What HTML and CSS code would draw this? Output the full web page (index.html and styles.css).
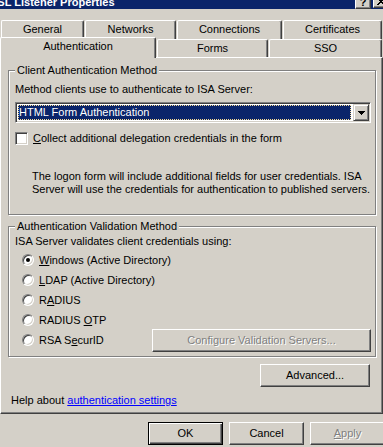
FILE: index.html
```html
<!DOCTYPE html>
<html>
<head>
<meta charset="utf-8">
<link rel="stylesheet" href="styles.css">
</head>
<body>
<div class="dialog">
  <div class="titlebar">
    <span class="title">SSL Listener Properties</span>
    <span class="tbtn help">?</span>
    <span class="tbtn close"><svg width="8" height="7" viewBox="0 0 8 7" shape-rendering="crispEdges"><path d="M0 0h2v1H0zM6 0h2v1H6zM1 1h2v1H1zM5 1h2v1H5zM2 2h4v1H2zM3 3h2v1H3zM2 4h4v1H2zM1 5h2v1H1zM5 5h2v1H5zM0 6h2v1H0zM6 6h2v1H6z" fill="#000"/></svg></span>
  </div>

  <div class="tabs">
    <div class="tabrow row1">
      <div class="tab t-general">General</div>
      <div class="tab t-networks">Networks</div>
      <div class="tab t-connections">Connections</div>
      <div class="tab t-certificates">Certificates</div>
    </div>
    <div class="tabrow row2">
      <div class="tab selected t-auth">Authentication</div>
      <div class="tab t-forms">Forms</div>
      <div class="tab t-sso">SSO</div>
    </div>
  </div>

  <div class="panel">
    <div class="group g1">
      <div class="group-title">Client Authentication Method</div>
      <div class="line l-method">Method clients use to authenticate to ISA Server:</div>
      <div class="combo">
        <div class="combo-sel"><span>HTML Form Authentication</span></div>
        <div class="combo-btn"><svg width="7" height="4" viewBox="0 0 7 4" shape-rendering="crispEdges"><path d="M0 0h7v1H0zM1 1h5v1H1zM2 2h3v1H2zM3 3h1v1H3z" fill="#000"/></svg></div>
      </div>
      <div class="check-row">
        <span class="checkbox"></span>
        <span><u>C</u>ollect additional delegation credentials in the form</span>
      </div>
      <p class="desc">The logon form will include additional fields for user credentials. ISA<br>Server will use the credentials for authentication to published servers.</p>
    </div>

    <div class="group g2">
      <div class="group-title">Authentication Validation Method</div>
      <div class="line l-isa">ISA Server validates client credentials using:</div>
      <div class="opts">
        <div class="opt"><span class="radio on"></span><span><u>W</u>indows (Active Directory)</span></div>
        <div class="opt"><span class="radio"></span><span><u>L</u>DAP (Active Directory)</span></div>
        <div class="opt"><span class="radio"></span><span>R<u>A</u>DIUS</span></div>
        <div class="opt"><span class="radio"></span><span>RADIUS <u>O</u>TP</span></div>
        <div class="opt"><span class="radio"></span><span>RSA S<u>e</u>curID</span>
          <span class="btn disabled btn-config">Configure Validation Servers...</span>
        </div>
      </div>
    </div>

    <div class="adv-row"><span class="btn btn-adv">Advanced...</span></div>

    <div class="help">Help about <a class="link" href="#">authentication settings</a></div>
  </div>

  <div class="btn-row">
    <span class="btn default btn-dlg">OK</span>
    <span class="btn btn-dlg">Cancel</span>
    <span class="btn disabled btn-dlg"><u>A</u>pply</span>
  </div>
</div>
</body>
</html>
```

FILE: styles.css
```css
html, body {
  margin: 0;
  padding: 0;
  overflow: hidden;
  background: #d4d0c8;
}

body {
  font-family: "Liberation Sans", Arial, sans-serif;
  font-size: 11px;
  line-height: 13px;
  color: #000;
}

.dialog {
  width: 392px;
  background: #d4d0c8;
}

/* Title bar */
.titlebar {
  height: 9px;
  background: #0a246a;
  display: flex;
  align-items: flex-end;
  overflow: hidden;
  padding-right: 3px;
}

.title {
  color: #fff;
  font-weight: bold;
  white-space: nowrap;
  margin-left: -10px;
}

.tbtn {
  box-sizing: border-box;
  width: 16px;
  height: 14px;
  flex-shrink: 0;
  margin-bottom: 1px;
  background: #d4d0c8;
  border: 1px solid;
  border-color: #fff #404040 #404040 #fff;
  box-shadow: inset -1px -1px #808080;
  display: flex;
  align-items: center;
  justify-content: center;
  font-weight: bold;
  font-size: 11px;
  line-height: 11px;
}

.help {
  margin-left: auto;
}

.tbtn.help {
  margin-left: auto;
}

.tbtn.close {
  margin-left: 2px;
}

/* Tabs */
.tabs {
  margin-top: 11px;
}

.tabrow {
  display: flex;
  align-items: flex-start;
  gap: 1px;
}

.row1 {
  margin-left: 1px;
}

.tab {
  box-sizing: border-box;
  height: 19px;
  background: #d4d0c8;
  border-top: 1px solid #fff;
  border-left: 1px solid #fff;
  border-right: 1px solid #404040;
  border-radius: 2px 2px 0 0;
  box-shadow: inset -1px 0 #808080;
  text-align: center;
  padding-top: 2px;
  white-space: nowrap;
}

.row2 .tab {
  height: 18px;
}

.row2 .tab.selected {
  height: 21px;
  margin-top: -2px;
  margin-bottom: -1px;
  position: relative;
  z-index: 1;
}

.t-general { width: 83px; }
.t-networks { width: 91px; }
.t-connections { width: 105px; }
.t-certificates { width: 99px; }
.t-auth { width: 156px; }
.t-forms { width: 111px; }
.t-sso { width: 113px; }

/* Panel */
.panel {
  box-sizing: border-box;
  width: 383px;
  border-top: 1px solid #fff;
  border-left: 1px solid #fff;
  border-right: 1px solid #404040;
  border-bottom: 1px solid #404040;
  box-shadow: inset -1px -1px #808080;
  padding: 12px 6px 6px 7px;
}

.group {
  border: 1px solid #808080;
  box-shadow: inset 1px 1px #fff, 1px 1px #fff;
  padding: 0 4px 18px 6px;
}

.g2 {
  margin-top: 11px;
  padding-bottom: 6px;
}

.group-title {
  display: table;
  margin-top: -7px;
  padding: 0 2px;
  background: #d4d0c8;
  white-space: nowrap;
}

.line {
  white-space: nowrap;
}

.l-method {
  margin-top: 6px;
}

.l-isa {
  margin-top: 2px;
}

/* Combo box */
.combo {
  box-sizing: border-box;
  width: 356px;
  height: 21px;
  margin-top: 6px;
  border: 1px solid;
  border-color: #808080 #fff #fff #808080;
  padding: 1px;
  box-shadow: inset 1px 1px #404040, inset -1px -1px #d4d0c8;
  background: #fff;
  display: flex;
}

.combo-sel {
  flex: 1;
  margin: 1px 2px 1px 1px;
  background: #0a246a;
  color: #fff;
  border: 1px dotted #f5db95;
  padding-left: 0;
  white-space: nowrap;
  line-height: 13px;
}

.combo-btn {
  box-sizing: border-box;
  width: 16px;
  height: 17px;
  flex-shrink: 0;
  background: #d4d0c8;
  border: 1px solid;
  border-color: #d4d0c8 #404040 #404040 #d4d0c8;
  box-shadow: inset 1px 1px #fff, inset -1px -1px #808080;
  display: flex;
  align-items: center;
  justify-content: center;
}

.combo-btn svg {
  display: block;
}

/* Checkbox */
.check-row {
  display: flex;
  align-items: center;
  height: 13px;
  margin-top: 9px;
  white-space: nowrap;
}

.checkbox {
  box-sizing: border-box;
  width: 13px;
  height: 13px;
  flex-shrink: 0;
  margin-right: 5px;
  background: #fff;
  border: 1px solid;
  border-color: #808080 #fff #fff #808080;
  box-shadow: inset 1px 1px #404040, inset -1px -1px #d4d0c8;
}

.desc {
  margin: 25px 0 0 17px;
  white-space: nowrap;
}

/* Radios */
.opts {
  margin-top: 2px;
}

.opt {
  display: flex;
  align-items: center;
  height: 20px;
  padding-left: 7px;
  white-space: nowrap;
}

.radio {
  box-sizing: border-box;
  width: 12px;
  height: 12px;
  flex-shrink: 0;
  margin-right: 5px;
  border-radius: 50%;
  background: #fff;
  border: 1px solid;
  border-color: #808080 #fff #fff #808080;
  box-shadow: inset 1px 1px #404040, inset -1px -1px #d4d0c8;
  position: relative;
}

.radio.on::after {
  content: "";
  position: absolute;
  left: 3px;
  top: 3px;
  width: 4px;
  height: 4px;
  border-radius: 50%;
  background: #000;
}

/* Buttons */
.btn {
  box-sizing: border-box;
  height: 23px;
  flex-shrink: 0;
  background: #d4d0c8;
  border: 1px solid;
  border-color: #fff #404040 #404040 #fff;
  box-shadow: inset -1px -1px #808080;
  display: flex;
  align-items: center;
  justify-content: center;
  white-space: nowrap;
}

.btn.default {
  border-color: #000;
  box-shadow: inset 1px 1px #fff, inset -1px -1px #404040, inset -2px -2px #808080;
}

.btn.disabled {
  color: #808080;
  text-shadow: 1px 1px 0 #fff;
}

.btn-config {
  width: 219px;
  margin-left: auto;
}

.adv-row {
  display: flex;
  justify-content: flex-end;
  margin-top: 7px;
  margin-right: 6px;
}

.btn-adv {
  width: 110px;
}

.help {
  margin: 7px 0 0 3px;
  white-space: nowrap;
}

.link {
  color: #0000ff;
  text-decoration: underline;
}

.btn-row {
  display: flex;
  justify-content: flex-end;
  gap: 6px;
  margin-top: 8px;
  padding-right: 7px;
}

.btn-dlg {
  width: 75px;
}
```
